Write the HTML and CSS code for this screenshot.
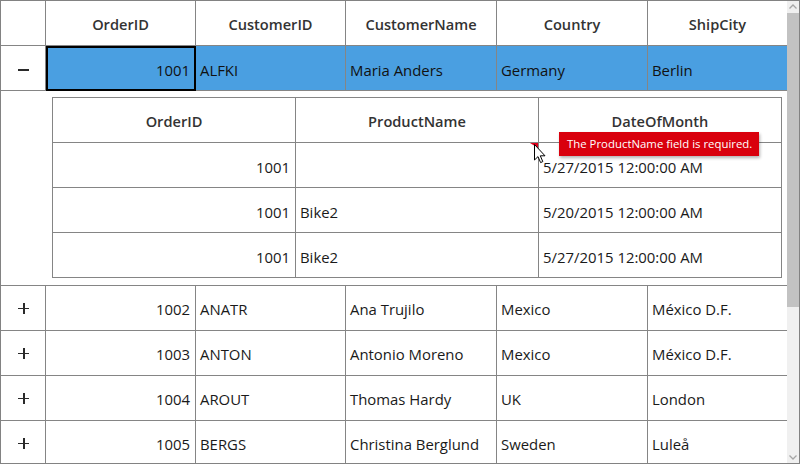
FILE: index.html
```html
<!DOCTYPE html>
<html>
<head>
<meta charset="utf-8">
<link rel="stylesheet" href="styles.css">
</head>
<body>
<div class="grid">
  <div class="viewport">
    <div class="row header">
      <div class="cell"></div>
      <div class="cell">OrderID</div>
      <div class="cell">CustomerID</div>
      <div class="cell">CustomerName</div>
      <div class="cell">Country</div>
      <div class="cell last">ShipCity</div>
    </div>
    <div class="row selected">
      <div class="cell expander"><span class="minus"></span></div>
      <div class="cell num current">1001</div>
      <div class="cell">ALFKI</div>
      <div class="cell">Maria Anders</div>
      <div class="cell">Germany</div>
      <div class="cell last">Berlin</div>
    </div>
    <div class="detail">
      <div class="nested">
        <div class="nrow nheader">
          <div class="ncell">OrderID</div>
          <div class="ncell">ProductName</div>
          <div class="ncell">DateOfMonth</div>
        </div>
        <div class="nrow">
          <div class="ncell num">1001</div>
          <div class="ncell error"><span class="err-mark"></span></div>
          <div class="ncell">5/27/2015 12:00:00 AM</div>
        </div>
        <div class="nrow">
          <div class="ncell num">1001</div>
          <div class="ncell">Bike2</div>
          <div class="ncell">5/20/2015 12:00:00 AM</div>
        </div>
        <div class="nrow">
          <div class="ncell num">1001</div>
          <div class="ncell">Bike2</div>
          <div class="ncell">5/27/2015 12:00:00 AM</div>
        </div>
      </div>
    </div>
    <div class="row">
      <div class="cell expander"><span class="plus"></span></div>
      <div class="cell num">1002</div>
      <div class="cell">ANATR</div>
      <div class="cell">Ana Trujilo</div>
      <div class="cell">Mexico</div>
      <div class="cell last">México D.F.</div>
    </div>
    <div class="row">
      <div class="cell expander"><span class="plus"></span></div>
      <div class="cell num">1003</div>
      <div class="cell">ANTON</div>
      <div class="cell">Antonio Moreno</div>
      <div class="cell">Mexico</div>
      <div class="cell last">México D.F.</div>
    </div>
    <div class="row">
      <div class="cell expander"><span class="plus"></span></div>
      <div class="cell num">1004</div>
      <div class="cell">AROUT</div>
      <div class="cell">Thomas Hardy</div>
      <div class="cell">UK</div>
      <div class="cell last">London</div>
    </div>
    <div class="row">
      <div class="cell expander"><span class="plus"></span></div>
      <div class="cell num">1005</div>
      <div class="cell">BERGS</div>
      <div class="cell">Christina Berglund</div>
      <div class="cell">Sweden</div>
      <div class="cell last">Luleå</div>
    </div>
  </div>
  <div class="scrollbar">
    <div class="sb-btn">
      <svg width="12" height="12" viewBox="0 0 12 12"><path d="M2.5 7.5 L6 4 L9.5 7.5" fill="none" stroke="#a6a6a6" stroke-width="1.3"/></svg>
    </div>
    <div class="sb-thumb"></div>
    <div class="sb-track"></div>
    <div class="sb-btn">
      <svg width="12" height="12" viewBox="0 0 12 12"><path d="M2.5 4.5 L6 8 L9.5 4.5" fill="none" stroke="#a6a6a6" stroke-width="1.3"/></svg>
    </div>
  </div>
  <div class="tooltip">The ProductName field is required.</div>
  <svg class="cursor" width="13" height="20" viewBox="0 0 13 20"><path d="M0.5 0.5 L0.5 16 L4 12.6 L6.6 18.6 L8.8 17.6 L6.3 11.8 L11 11.8 Z" fill="#fff" stroke="#000" stroke-width="1" stroke-linejoin="miter"/></svg>
</div>
</body>
</html>
```
FILE: styles.css
```css
html, body {
  margin: 0;
  padding: 0;
  background: #fff;
}
.grid {
  position: relative;
  width: 800px;
  height: 464px;
  box-sizing: border-box;
  border: 1px solid #828282;
  display: flex;
  font-family: "Open Sans", "Noto Sans", sans-serif;
  font-size: 14.9px;
  color: #1a1a1a;
  overflow: hidden;
}
.viewport {
  width: 786px;
  height: 462px;
  overflow: hidden;
}
.row {
  display: grid;
  grid-template-columns: 45px 150px 150px 151px 151px 139px;
  height: 45px;
  box-sizing: border-box;
  border-bottom: 1px solid #858585;
}
.cell {
  box-sizing: border-box;
  border-right: 1px solid #858585;
  display: flex;
  align-items: center;
  padding: 2px 4px 0 4px;
  white-space: nowrap;
  position: relative;
}
.cell.last {
  border-right: none;
}
.header .cell {
  justify-content: center;
  font-weight: 600;
  font-size: 14.6px;
  color: #333;
  padding: 1px 0 0 0;
}
.num {
  justify-content: flex-end;
}
.cell.num {
  padding-right: 5px;
}
.selected .cell {
  background: #4a9fe1;
  color: #111;
  padding-top: 3px;
}
.selected .cell.expander {
  background: #fff;
}
.current::after {
  content: "";
  position: absolute;
  left: 0;
  top: 0;
  right: -1px;
  bottom: -1px;
  border: 2px solid #000;
}
.expander {
  justify-content: center;
  padding: 0 0 0 1px;
}
.minus {
  width: 11px;
  height: 2px;
  background: #2a2a2a;
  margin-top: 1px;
}
.plus {
  position: relative;
  width: 11px;
  height: 11px;
  margin-top: 0;
}
.plus::before, .plus::after {
  content: "";
  position: absolute;
  background: #2a2a2a;
}
.plus::before {
  left: 0;
  top: 5px;
  width: 11px;
  height: 1.5px;
}
.plus::after {
  left: 5px;
  top: 0;
  width: 1.5px;
  height: 11px;
}
.detail {
  height: 195px;
  box-sizing: border-box;
  border-bottom: 1px solid #858585;
  padding: 6px 5px 7px 51px;
}
.nested {
  width: 730px;
  box-sizing: border-box;
  border-left: 1px solid #858585;
  border-top: 1px solid #858585;
}
.nrow {
  display: grid;
  grid-template-columns: 243px 243px 243px;
  height: 45px;
}
.ncell {
  box-sizing: border-box;
  border-right: 1px solid #858585;
  border-bottom: 1px solid #858585;
  display: flex;
  align-items: center;
  padding: 4px 4px 0 4px;
  white-space: nowrap;
  position: relative;
}
.ncell.num {
  padding-right: 5px;
}
.nheader .ncell {
  justify-content: center;
  font-weight: 600;
  font-size: 14.6px;
  color: #333;
  padding: 2px 0 0 0;
}
.err-mark {
  position: absolute;
  right: 0;
  top: 0;
  width: 0;
  height: 0;
  border-top: 5px solid #e0001b;
  border-left: 8px solid transparent;
}
.scrollbar {
  width: 12px;
  height: 462px;
  background: #f0f0f0;
  display: flex;
  flex-direction: column;
}
.sb-btn {
  height: 12px;
  display: flex;
  align-items: center;
  justify-content: center;
}
.sb-thumb {
  height: 294px;
  background: #c2c2c2;
}
.sb-track {
  flex: 1;
}
.tooltip {
  position: absolute;
  left: 558px;
  top: 131px;
  height: 24px;
  box-sizing: border-box;
  padding: 0 7px 0 8px;
  background: #d9000d;
  color: #fff;
  font-size: 11.4px;
  line-height: 24px;
  white-space: nowrap;
  box-shadow: 1px 2px 3px rgba(0,0,0,0.3);
}
.cursor {
  position: absolute;
  left: 533px;
  top: 143px;
}
```
